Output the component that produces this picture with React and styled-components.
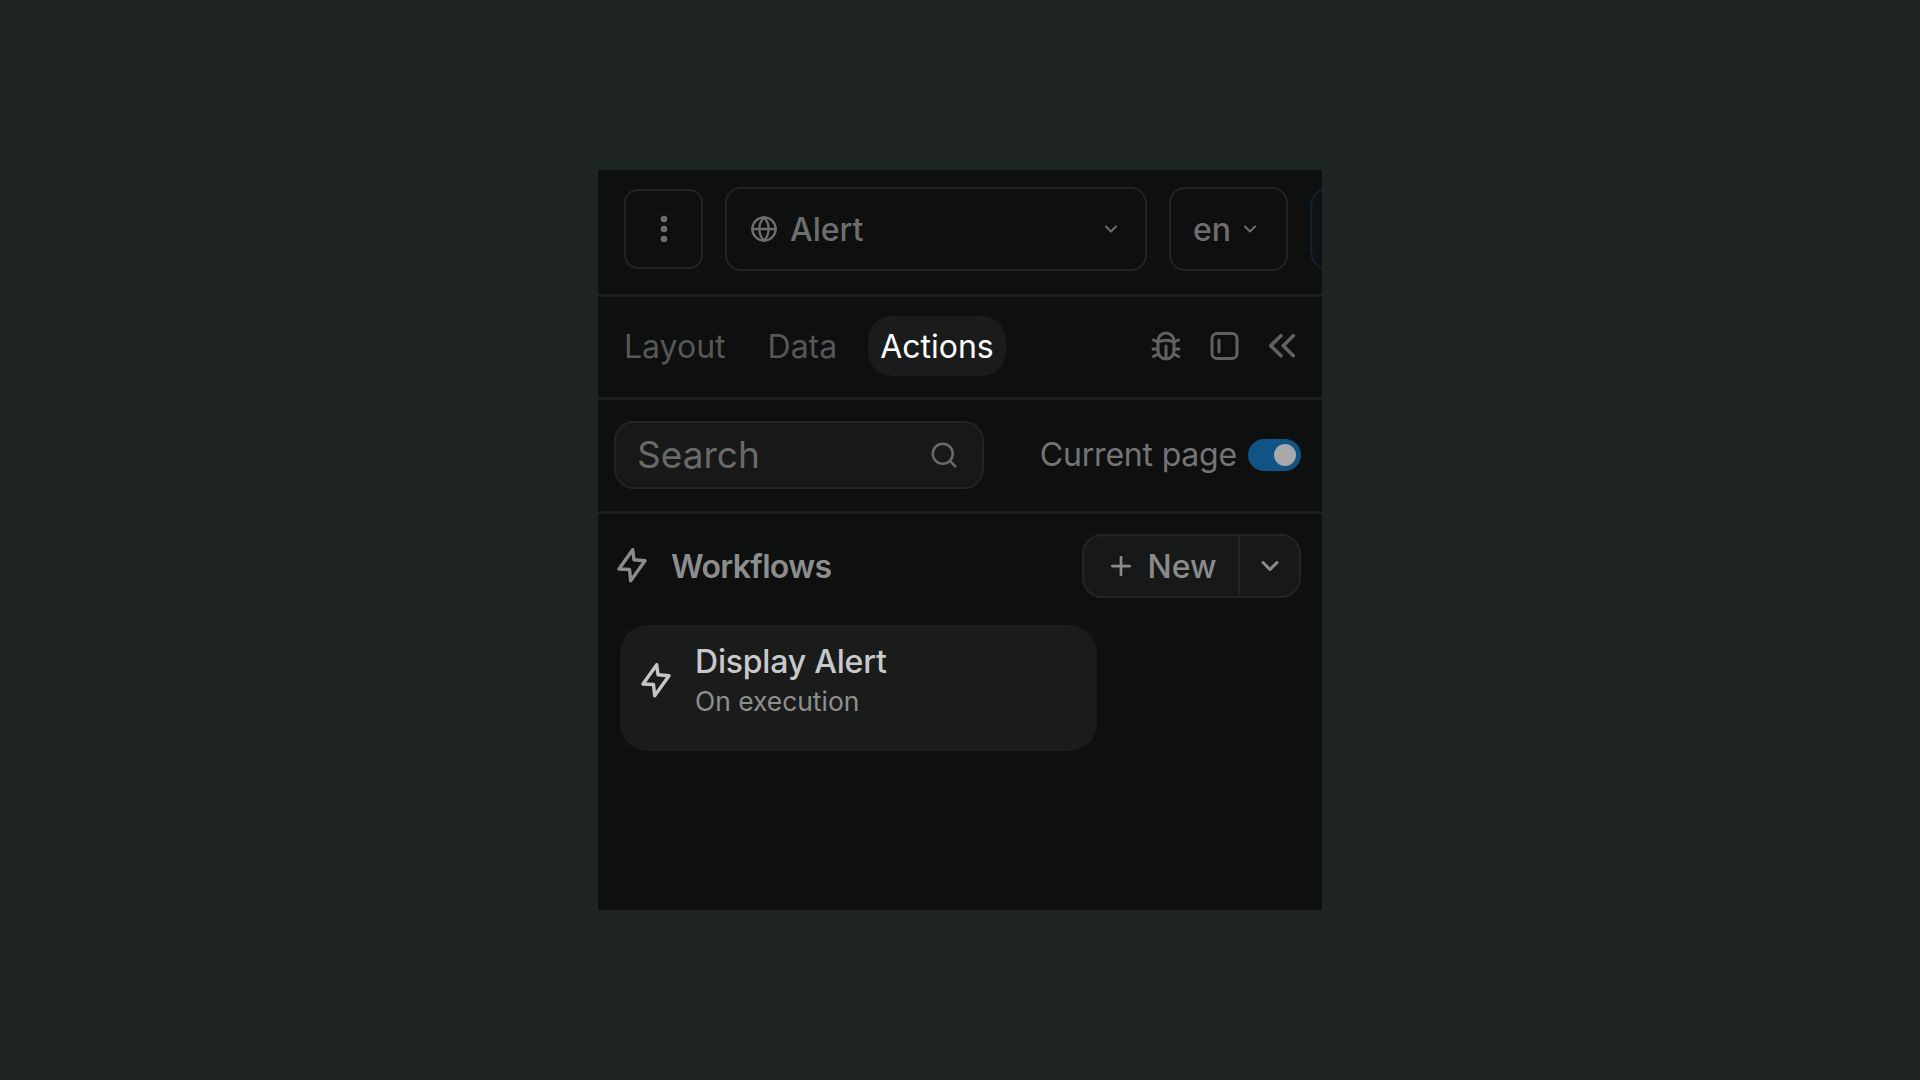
import styled, { createGlobalStyle } from "styled-components";
import { ChevronDown, EllipsisVertical, Globe, Plus, Search } from "lucide-react";

const GlobalStyle = createGlobalStyle`
  html, body {
    margin: 0;
    padding: 0;
    background: #1e2424;
    font-family: Inter, "Liberation Sans", sans-serif;
  }
`;

const Page = styled.div`
  min-height: 100vh;
  display: grid;
  place-items: center;
`;

const Panel = styled.div`
  width: 724px;
  height: 740px;
  background: #0e0f0f;
  overflow: hidden;
  display: flex;
  flex-direction: column;
`;

const Header = styled.div`
  height: 127px;
  flex: none;
  box-sizing: border-box;
  display: flex;
  align-items: center;
  gap: 22px;
  padding: 0 0 6px 26px;
  border-bottom: 3px solid #1d1f1f;
`;

const MenuButton = styled.div`
  width: 79px;
  height: 80px;
  flex: none;
  box-sizing: border-box;
  border: 2px solid #232525;
  border-radius: 14px;
  display: flex;
  align-items: center;
  justify-content: center;
  color: #6e6e6e;
`;

const Select = styled.div`
  width: ${(p) => p.$width}px;
  height: 84px;
  flex: none;
  box-sizing: border-box;
  border: 2px solid #232525;
  border-radius: 16px;
  display: flex;
  align-items: center;
  padding: 0 ${(p) => p.$right}px 0 ${(p) => p.$left}px;
  color: #6e6e6e;
  font-size: 32px;
  font-weight: 500;
`;

const SelectLabel = styled.span`
  margin-left: ${(p) => p.$gap || 0}px;
  flex: 1;
`;

const RunButton = styled.div`
  width: 60px;
  height: 84px;
  flex: none;
  box-sizing: border-box;
  border: 2px solid #11212d;
  border-radius: 20px;
  background: #0e1215;
`;

const TabBar = styled.div`
  height: 103px;
  flex: none;
  box-sizing: border-box;
  display: flex;
  align-items: center;
  padding: 0 25px 2px 26px;
  border-bottom: 3px solid #1d1f1f;
`;

const Tab = styled.div`
  height: 60px;
  box-sizing: border-box;
  display: flex;
  align-items: center;
  padding: 0 ${(p) => (p.$active ? 12 : 0)}px;
  border-radius: 24px;
  font-size: 32px;
  color: ${(p) => (p.$active ? "#ffffff" : "#565858")};
  background: ${(p) => (p.$active ? "#1a1c1c" : "transparent")};
  margin-left: ${(p) => p.$offset || 0}px;
`;

const TabIcons = styled.div`
  margin-left: auto;
  display: flex;
  align-items: center;
  gap: 28px;
  color: #606262;
`;

const FilterBar = styled.div`
  height: 114px;
  flex: none;
  box-sizing: border-box;
  display: flex;
  align-items: center;
  padding: 0 21px 2px 16px;
  border-bottom: 3px solid #1d1f1f;
`;

const SearchBox = styled.div`
  width: 370px;
  height: 68px;
  box-sizing: border-box;
  background: #171919;
  border: 2px solid #232525;
  border-radius: 20px;
  display: flex;
  align-items: center;
  justify-content: space-between;
  padding: 0 23px 0 21px;
  font-size: 37px;
  color: #686a6a;
`;

const ToggleLabel = styled.span`
  margin-left: auto;
  font-size: 32px;
  letter-spacing: -0.2px;
  color: #737575;
`;

const Toggle = styled.div`
  width: 53px;
  height: 32px;
  margin-left: 11px;
  box-sizing: border-box;
  border-radius: 16px;
  background: #0f5485;
  display: flex;
  align-items: center;
  justify-content: flex-end;
  padding-right: 5px;
`;

const Knob = styled.div`
  width: 22px;
  height: 22px;
  border-radius: 50%;
  background: #a8a8a8;
`;

const Content = styled.div`
  flex: 1;
  padding: 20px 21px 0 17px;
`;

const SectionRow = styled.div`
  height: 64px;
  display: flex;
  align-items: center;
  color: #8a8c8c;
`;

const SectionTitle = styled.span`
  margin-left: 22px;
  font-size: 32px;
  font-weight: 600;
  letter-spacing: -0.65px;
  color: #8c8e8e;
`;

const SplitButton = styled.div`
  margin-left: auto;
  width: 219px;
  height: 64px;
  box-sizing: border-box;
  background: #171919;
  border: 2px solid #232525;
  border-radius: 20px;
  display: flex;
  align-items: stretch;
  font-size: 32px;
  font-weight: 500;
  color: #8a8c8c;
`;

const NewPart = styled.div`
  width: 156px;
  box-sizing: border-box;
  border-right: 2px solid #232525;
  display: flex;
  align-items: center;
  justify-content: center;
  gap: 12px;
`;

const ArrowPart = styled.div`
  flex: 1;
  display: flex;
  align-items: center;
  justify-content: center;
`;

const Card = styled.div`
  width: 477px;
  height: 126px;
  margin: 27px 0 0 5px;
  box-sizing: border-box;
  background: #1a1c1c;
  border-radius: 28px;
  display: flex;
  align-items: flex-start;
  padding: 17px 0 0 19px;
`;

const CardIcon = styled.div`
  display: flex;
  margin-top: 19px;
  color: #c4c6c6;
`;

const CardText = styled.div`
  margin-left: 22px;
`;

const CardTitle = styled.div`
  font-size: 32px;
  line-height: 40px;
  font-weight: 500;
  letter-spacing: -0.2px;
  color: #c8caca;
`;

const CardSub = styled.div`
  font-size: 26.4px;
  line-height: 39px;
  color: #8d8f8f;
`;

const BoltGlyph = () => (
  <svg width="34" height="40" viewBox="0 0 34 40" fill="none" stroke="currentColor" strokeWidth="3.4" strokeLinejoin="round">
    <path d="M17.7 3.7 4 23l10.5.5 1.2 11.2L30 14.7l-11-1z" />
  </svg>
);

const BugGlyph = () => (
  <svg width="30" height="30" viewBox="0 0 30 30" fill="none" stroke="currentColor" strokeWidth="3" strokeLinecap="round">
    <path d="M7 10a8 8 0 0 1 16 0v10a8 8 0 0 1-16 0z" />
    <path d="M7 11c4.5-2.5 11.5-2.5 16 0" />
    <path d="M15 15v12" />
    <path d="M7 11 2.5 9M23 11l4.5-2M7 18H2M23 18h5M7 23l-4.5 2.5M23 23l4.5 2.5" />
  </svg>
);

const PanelGlyph = () => (
  <svg width="30" height="30" viewBox="0 0 30 30" fill="none" stroke="currentColor" strokeWidth="3" strokeLinecap="round">
    <rect x="3" y="2.5" width="25" height="25" rx="5" />
    <path d="M10 9v12" />
  </svg>
);

const CollapseGlyph = () => (
  <svg width="30" height="30" viewBox="0 0 30 30" fill="none" stroke="currentColor" strokeWidth="3.6" strokeLinecap="round" strokeLinejoin="round">
    <path d="M14 4.7 3.7 14.7 14 24.7M26.3 4.7 16.3 14.7 26.3 24.7" />
  </svg>
);

export default function App() {
  return (
    <Page>
      <GlobalStyle />
      <Panel>
        <Header>
          <MenuButton>
            <EllipsisVertical size={34} strokeWidth={2.6} />
          </MenuButton>
          <Select $width={422} $left={23} $right={24}>
            <Globe size={28} strokeWidth={2} />
            <SelectLabel $gap={12}>Alert</SelectLabel>
            <ChevronDown size={20} strokeWidth={2.4} />
          </Select>
          <Select $width={119} $left={22} $right={26}>
            <SelectLabel>en</SelectLabel>
            <ChevronDown size={20} strokeWidth={2.4} />
          </Select>
          <RunButton />
        </Header>
        <TabBar>
          <Tab>Layout</Tab>
          <Tab $offset={42}>Data</Tab>
          <Tab $active $offset={31}>Actions</Tab>
          <TabIcons>
            <BugGlyph />
            <PanelGlyph />
            <CollapseGlyph />
          </TabIcons>
        </TabBar>
        <FilterBar>
          <SearchBox>
            Search
            <Search size={30} strokeWidth={2} />
          </SearchBox>
          <ToggleLabel>Current page</ToggleLabel>
          <Toggle>
            <Knob />
          </Toggle>
        </FilterBar>
        <Content>
          <SectionRow>
            <BoltGlyph />
            <SectionTitle>Workflows</SectionTitle>
            <SplitButton>
              <NewPart>
                <Plus size={30} strokeWidth={2.2} />
                New
              </NewPart>
              <ArrowPart>
                <ChevronDown size={28} strokeWidth={2.6} />
              </ArrowPart>
            </SplitButton>
          </SectionRow>
          <Card>
            <CardIcon>
              <BoltGlyph />
            </CardIcon>
            <CardText>
              <CardTitle>Display Alert</CardTitle>
              <CardSub>On execution</CardSub>
            </CardText>
          </Card>
        </Content>
      </Panel>
    </Page>
  );
}
